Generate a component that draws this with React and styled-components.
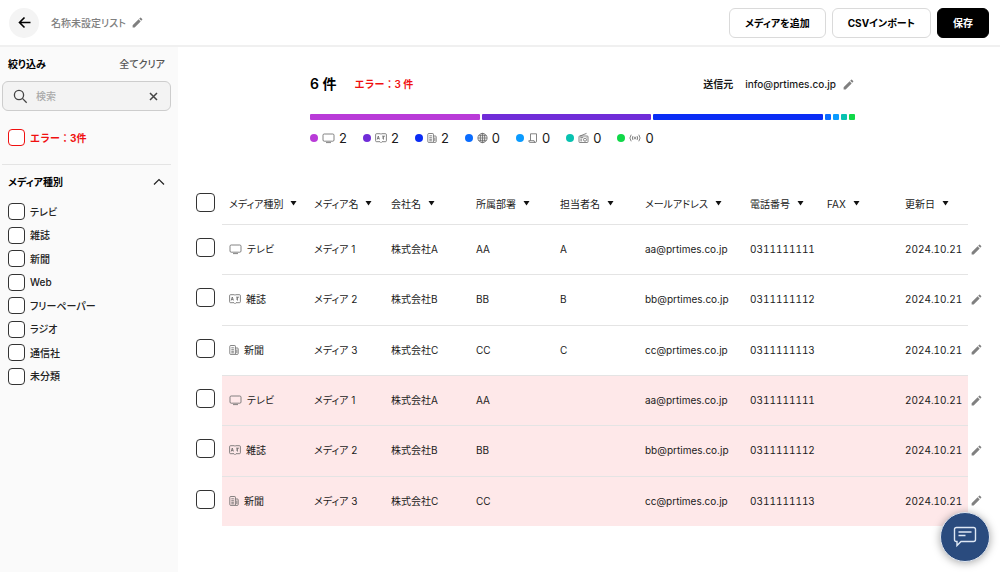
import React, { useState } from "react";
import styled, { createGlobalStyle, ThemeProvider } from "styled-components";
import { MdEdit } from "react-icons/md";

const theme = {
  colors: {
    text: "#1a1a1a",
    muted: "#808080",
    line: "#e4e4e4",
    error: "#f01010",
    errorBg: "#fee8e9",
    side: "#fafafa",
    chat: "#2a4b7e",
  },
  size: { sm: "10px", md: "13px", lg: "14px" },
};

const GlobalStyle = createGlobalStyle`
  *, *::before, *::after {
    box-sizing: border-box;
  }
  body {
    margin: 0;
    background: #fff;
    color: #1a1a1a;
    font-family: Inter, "Noto Sans CJK JP", sans-serif;
    font-size: 10px;
    line-height: 16px;
    font-weight: 500;
  }
  button, input {
    font: inherit;
    color: inherit;
  }
  button {
    padding: 0;
    border: 0;
    background: none;
    cursor: pointer;
  }
  svg {
    display: block;
    flex-shrink: 0;
  }
`;

const Page = styled.div`
  min-height: 100vh;
  display: flex;
  flex-direction: column;
  font-feature-settings: "palt";
`;

const TopBar = styled.header`
  display: flex;
  align-items: center;
  height: 47px;
  padding: 0 11px 0 9px;
  border-bottom: 2px solid #f0f0f0;
`;

const BackButton = styled.button`
  display: grid;
  place-items: center;
  width: 30px;
  height: 30px;
  border-radius: 50%;
  background: #f4f4f4;
`;

const ListTitle = styled.h1`
  margin: 0 5px 0 12px;
  font-size: ${({ theme }) => theme.size.sm};
  font-weight: 500;
  color: ${({ theme }) => theme.colors.muted};
`;

const EditButton = styled.button`
  display: flex;
  color: ${({ theme }) => theme.colors.muted};
`;

const Actions = styled.div`
  display: flex;
  gap: 6px;
  margin-left: auto;
`;

const Button = styled.button`
  height: 30px;
  padding: 0 15px;
  border: 1px solid ${({ $dark }) => ($dark ? "#000" : "#dadada")};
  border-radius: 6px;
  background: ${({ $dark }) => ($dark ? "#000" : "#fff")};
  color: ${({ $dark }) => ($dark ? "#fff" : "#000")};
  font-weight: 700;
  white-space: nowrap;
`;

const Body = styled.div`
  flex: 1;
  display: flex;
`;

const Sidebar = styled.aside`
  flex: 0 0 178px;
  min-width: 0;
  padding: 9px 7px 0 2px;
  background: ${({ theme }) => theme.colors.side};
`;

const SideHead = styled.div`
  display: flex;
  justify-content: space-between;
  align-items: center;
  padding: 0 6px;
  h2 {
    margin: 0;
    font-size: ${({ theme }) => theme.size.sm};
    font-weight: 700;
    color: #000;
  }
`;

const ClearButton = styled.button`
  color: #555;
`;

const SearchBox = styled.label`
  display: flex;
  align-items: center;
  gap: 8px;
  height: 30px;
  margin-top: 9px;
  padding: 0 12px 0 10px;
  border: 1px solid #cdcdcd;
  border-radius: 6px;
  background: #f3f3f3;
  input {
    flex: 1;
    width: 100%;
    min-width: 0;
    padding: 0;
    border: 0;
    outline: 0;
    background: none;
    &::placeholder {
      color: #aaa;
      opacity: 1;
    }
  }
`;

const Check = styled.input.attrs({ type: "checkbox" })`
  appearance: none;
  display: block;
  flex-shrink: 0;
  width: ${({ $large }) => ($large ? "19px" : "17px")};
  height: ${({ $large }) => ($large ? "19px" : "17px")};
  margin: 0;
  border: 1px solid ${({ $error, theme }) => ($error ? theme.colors.error : "#333")};
  border-radius: 4px;
  background: #fff;
  &:checked {
    background: ${({ $error, theme }) => ($error ? theme.colors.error : "#333")};
  }
`;

const CheckLabel = styled.label`
  display: flex;
  align-items: center;
  gap: 5px;
  color: ${({ $error, theme }) => ($error ? theme.colors.error : "#222")};
  font-weight: ${({ $error }) => ($error ? 700 : 500)};
  font-feature-settings: ${({ $error }) => ($error ? "normal" : "inherit")};
`;

const IconSvg = styled.svg`
  fill: none;
  stroke: #666;
  stroke-width: 0.8;
`;

const ErrorFilter = styled.div`
  padding: 18px 6px;
  border-bottom: 1px solid ${({ theme }) => theme.colors.line};
`;

const FilterHead = styled.button`
  display: flex;
  justify-content: space-between;
  align-items: center;
  width: 100%;
  margin-top: 9px;
  padding: 0 6px;
  font-weight: 700;
  color: #000;
`;

const FilterList = styled.div`
  display: grid;
  grid-auto-rows: 1fr;
  height: 188px;
  margin-top: 10px;
  padding: 0 6px;
`;

const Main = styled.main`
  flex: 1;
  min-width: 0;
  padding-left: 18px;
`;

const Summary = styled.section`
  padding-right: 31px;
`;

const SummaryInner = styled.div`
  max-width: 545px;
  margin: 0 auto;
  padding-top: 27px;
`;

const SummaryHead = styled.div`
  display: flex;
  align-items: center;
  height: 20px;
`;

const Total = styled.strong`
  font-size: ${({ theme }) => theme.size.lg};
  font-weight: 600;
  color: #000;
`;

const ErrorCount = styled.strong`
  margin-left: 18px;
  color: ${({ theme }) => theme.colors.error};
  font-weight: 600;
  font-feature-settings: normal;
`;

const Sender = styled.div`
  display: flex;
  align-items: center;
  margin-left: auto;
  b {
    margin-right: 12px;
    font-weight: 600;
  }
  span {
    margin-right: 6px;
  }
`;

const Ratio = styled.div`
  display: flex;
  gap: 2px;
  height: 6px;
  margin-top: 20px;
`;

const Segment = styled.div`
  flex: ${({ $count }) => ($count ? `${$count} 1 0` : "0 0 6px")};
  border-radius: 1px;
  background: ${({ $color }) => $color};
`;

const Legend = styled.ul`
  display: flex;
  gap: 16px;
  margin: 8px 0 0;
  padding: 0;
  list-style: none;
`;

const LegendItem = styled.li`
  display: flex;
  align-items: center;
  gap: 4px;
  height: 20px;
  font-size: ${({ theme }) => theme.size.md};
  font-weight: 400;
  &::before {
    content: "";
    width: 8px;
    height: 8px;
    border-radius: 50%;
    background: ${({ $color }) => $color};
  }
`;

const MediaTable = styled.table`
  width: 100%;
  height: 343px;
  margin-top: 35px;
  border-collapse: separate;
  border-spacing: 0;
  table-layout: fixed;
  white-space: nowrap;
`;

const HeadCell = styled.th`
  height: 41px;
  padding: 0 0 0 7px;
  text-align: left;
  font-weight: 400;
`;

const SortButton = styled.button`
  display: flex;
  align-items: center;
  gap: 7px;
`;

const CheckCell = styled.td`
  height: ${({ $head }) => ($head ? "41px" : "auto")};
  padding: 0 0 3px;
`;

const Cell = styled.td`
  padding: 0 0 1px 7px;
  border-top: 1px solid ${({ theme }) => theme.colors.line};
  background: ${({ $error, theme }) => ($error ? theme.colors.errorBg : "#fff")};
  font-weight: 400;
  font-variant-numeric: ${({ $digits }) => ($digits ? "tabular-nums" : "normal")};
`;

const EditCell = styled.td`
  padding: 0 0 0 2px;
`;

const MediaType = styled.span`
  display: flex;
  align-items: center;
  gap: 5px;
`;

const ChatButton = styled.button`
  position: fixed;
  right: 10px;
  bottom: 10px;
  display: grid;
  place-items: center;
  width: 50px;
  height: 50px;
  border: 1px solid #dfe5ee;
  border-radius: 50%;
  background: ${({ theme }) => theme.colors.chat};
  box-shadow: 0 1px 8px rgba(0, 0, 0, 0.35);
`;

const TvIcon = () => (
  <IconSvg width="13" height="12" viewBox="0 0 13 12">
    <rect x="1" y="2" width="11" height="7.2" rx="1.2" />
    <path d="M4 10.6h5" />
  </IconSvg>
);

const MagazineIcon = () => (
  <IconSvg width="12" height="12" viewBox="0 0 12 12">
    <path d="M1.600 1.700h3.600l.8.600.8-.6h3.600q1 0 1 1v6q0 1-1 1H7l-1 1-1-1H1.600q-1 0-1-1v-6q0-1 1-1z" />
    <path d="M2.200 7.500l1.100-3.500 1.100 3.500M2.600 6.400h1.500M7 4.200h3M8.500 4.200v3.400M7 6h1" />
  </IconSvg>
);

const NewsIcon = () => (
  <IconSvg width="10" height="12" viewBox="0 0 10 12">
    <path d="M1.700 1.500h4q.7 0 .7.7v8.200H1.700q-.9 0-.9-.9V2.400q0-.9.9-.9zM6.400 4h2q.8 0 .8.800v4.700q0 .9-.9.9H6.400M2.300 3.800h2.600M2.300 5.700h2.600M2.300 7.300h2.600M2.300 8.800h2.600M7.800 5.500v3.500" />
  </IconSvg>
);

const GlobeIcon = () => (
  <IconSvg width="11" height="12" viewBox="0 0 11 12">
    <circle cx="5.500" cy="6" r="4.600" />
    <ellipse cx="5.500" cy="6" rx="2.200" ry="4.600" />
    <path d="M5.500 1.400v9.200M.9 6h9.200M1.600 3.700h7.800M1.600 8.300h7.800" />
  </IconSvg>
);

const PaperIcon = () => (
  <IconSvg width="10" height="12" viewBox="0 0 10 12">
    <path d="M2.500 8.500V1.800h6v7.400q0 1.200-1.200 1.200H2Q.8 10.400.8 8.700h5.300q0 1.700 1.200 1.700" />
  </IconSvg>
);

const RadioIcon = () => (
  <IconSvg width="11" height="12" viewBox="0 0 11 12">
    <path d="M2 4l6.500-2.600" />
    <rect x="1" y="4" width="9" height="6.500" rx="0.800" />
    <circle cx="7" cy="7.700" r="1.500" />
    <path d="M2.300 5.600h3M2.300 7.200h1.800M2.300 8.800h1.800M8.500 5.400h.6" />
  </IconSvg>
);

const AntennaIcon = () => (
  <IconSvg width="12" height="12" viewBox="0 0 12 12">
    <circle cx="6" cy="6" r="0.900" />
    <path d="M4 4q-1.400 2 0 4M8 4q1.400 2 0 4M2.200 2.700q-2.600 3.300 0 6.600M9.800 2.700q2.600 3.300 0 6.600" />
  </IconSvg>
);

const MEDIA = [
  { label: "テレビ", count: 2, color: "#b93bd8", icon: TvIcon },
  { label: "雑誌", count: 2, color: "#702cd8", icon: MagazineIcon },
  { label: "新聞", count: 2, color: "#0a2cf5", icon: NewsIcon },
  { label: "Web", count: 0, color: "#0a6cff", icon: GlobeIcon },
  { label: "フリーペーパー", count: 0, color: "#0a9bff", icon: PaperIcon },
  { label: "ラジオ", count: 0, color: "#08c2b0", icon: RadioIcon },
  { label: "通信社", count: 0, color: "#10d848", icon: AntennaIcon },
  { label: "未分類" },
];

const COLUMNS = [
  { label: "メディア種別", width: 85 },
  { label: "メディア名", width: 77 },
  { label: "会社名", width: 85 },
  { label: "所属部署", width: 84 },
  { label: "担当者名", width: 85 },
  { label: "メールアドレス", width: 105 },
  { label: "電話番号", width: 77 },
  { label: "FAX", width: 78 },
  { label: "更新日", width: 70 },
];

const BASE_ROWS = [
  { type: 0, name: "メディア 1", company: "株式会社A", dept: "AA", person: "A", mail: "aa@prtimes.co.jp", tel: "0311111111" },
  { type: 1, name: "メディア 2", company: "株式会社B", dept: "BB", person: "B", mail: "bb@prtimes.co.jp", tel: "0311111112" },
  { type: 2, name: "メディア 3", company: "株式会社C", dept: "CC", person: "C", mail: "cc@prtimes.co.jp", tel: "0311111113" },
];

// the second half are the rows with a missing contact person
const ROWS = [
  ...BASE_ROWS,
  ...BASE_ROWS.map((row) => ({ ...row, person: "", error: true })),
];

const Row = ({ row }) => {
  const { label, icon: Icon } = MEDIA[row.type];
  return (
    <tr>
      <CheckCell>
        <Check $large aria-label={`${row.name}を選択`} />
      </CheckCell>
      <Cell $error={row.error}>
        <MediaType>
          <Icon />
          {label}
        </MediaType>
      </Cell>
      <Cell $error={row.error}>{row.name}</Cell>
      <Cell $error={row.error}>{row.company}</Cell>
      <Cell $error={row.error}>{row.dept}</Cell>
      <Cell $error={row.error}>{row.person}</Cell>
      <Cell $error={row.error}>{row.mail}</Cell>
      <Cell $error={row.error} $digits>
        {row.tel}
      </Cell>
      <Cell $error={row.error} />
      <Cell $error={row.error} $digits>
        2024.10.21
      </Cell>
      <EditCell>
        <EditButton aria-label="編集">
          <MdEdit size={13} />
        </EditButton>
      </EditCell>
    </tr>
  );
};

const App = () => {
  const [open, setOpen] = useState(true);
  const [query, setQuery] = useState("");

  return (
    <ThemeProvider theme={theme}>
      <GlobalStyle />
      <Page lang="ja">
        <TopBar>
          <BackButton aria-label="戻る">
            <svg width="13" height="13" viewBox="0 0 13 13" fill="none" stroke="#000" strokeWidth="1.600">
              <path d="M6.500 1.500l-5 5 5 5M1.500 6.500h11" />
            </svg>
          </BackButton>
          <ListTitle>名称未設定リスト</ListTitle>
          <EditButton aria-label="リスト名を編集">
            <MdEdit size={13} />
          </EditButton>
          <Actions>
            <Button>メディアを追加</Button>
            <Button>CSVインポート</Button>
            <Button $dark>保存</Button>
          </Actions>
        </TopBar>
        <Body>
          <Sidebar>
            <SideHead>
              <h2>絞り込み</h2>
              <ClearButton>全てクリア</ClearButton>
            </SideHead>
            <SearchBox>
              <svg width="15" height="15" viewBox="0 0 15 15" fill="none" stroke="#444" strokeWidth="1.300">
                <circle cx="6" cy="6" r="4.600" />
                <path d="M9.400 9.400l4.300 4.300" />
              </svg>
              <input
                type="text"
                placeholder="検索"
                aria-label="検索"
                value={query}
                onChange={(e) => setQuery(e.target.value)}
              />
              <button aria-label="検索語を消去" onClick={() => setQuery("")}>
                <svg width="9" height="9" viewBox="0 0 9 9" stroke="#444" strokeWidth="1.500">
                  <path d="M1 1l7 7M8 1l-7 7" />
                </svg>
              </button>
            </SearchBox>
            <ErrorFilter>
              <CheckLabel $error>
                <Check $error />
                エラー：3件
              </CheckLabel>
            </ErrorFilter>
            <FilterHead onClick={() => setOpen(!open)} aria-expanded={open}>
              メディア種別
              <svg width="12" height="8" viewBox="0 0 12 8" fill="none" stroke="#222" strokeWidth="1.200">
                <path d="M1 6.500l5-5 5 5" />
              </svg>
            </FilterHead>
            {open && (
              <FilterList>
                {MEDIA.map(({ label }) => (
                  <CheckLabel key={label}>
                    <Check />
                    {label}
                  </CheckLabel>
                ))}
              </FilterList>
            )}
          </Sidebar>
          <Main>
            <Summary>
              <SummaryInner>
                <SummaryHead>
                  <Total>6 件</Total>
                  <ErrorCount>エラー：3 件</ErrorCount>
                  <Sender>
                    <b>送信元</b>
                    <span>info@prtimes.co.jp</span>
                    <EditButton aria-label="送信元を編集">
                      <MdEdit size={13} />
                    </EditButton>
                  </Sender>
                </SummaryHead>
                <Ratio>
                  {MEDIA.filter((m) => m.icon).map((m) => (
                    <Segment key={m.label} $count={m.count} $color={m.color} />
                  ))}
                </Ratio>
                <Legend>
                  {MEDIA.filter((m) => m.icon).map(({ label, count, color, icon: Icon }) => (
                    <LegendItem key={label} $color={color}>
                      <Icon />
                      {count}
                    </LegendItem>
                  ))}
                </Legend>
              </SummaryInner>
            </Summary>
            <MediaTable>
              <colgroup>
                <col width="26" />
                {COLUMNS.map(({ label, width }) => (
                  <col key={label} width={width} />
                ))}
                <col width="32" />
              </colgroup>
              <thead>
                <tr>
                  <CheckCell $head>
                    <Check $large aria-label="すべて選択" />
                  </CheckCell>
                  {COLUMNS.map(({ label }) => (
                    <HeadCell key={label} scope="col">
                      <SortButton>
                        {label}
                        <svg width="7" height="5" viewBox="0 0 7 5" fill="#111">
                          <path d="M0.500 0h6L3.500 4.500z" />
                        </svg>
                      </SortButton>
                    </HeadCell>
                  ))}
                  <td />
                </tr>
              </thead>
              <tbody>
                {ROWS.map((row, i) => (
                  <Row key={i} row={row} />
                ))}
              </tbody>
            </MediaTable>
          </Main>
        </Body>
        <ChatButton aria-label="チャット">
          <svg width="24" height="22" viewBox="0 0 24 22" fill="none" stroke="#dfe8f5" strokeWidth="1.400">
            <path d="M3.500 1.500h17q2 0 2 2v10q0 2-2 2H8l-4 4v-4h-.5q-2 0-2-2v-10q0-2 2-2zM5.500 6h13M5.500 9.500h7" />
          </svg>
        </ChatButton>
      </Page>
    </ThemeProvider>
  );
};

export default App;
